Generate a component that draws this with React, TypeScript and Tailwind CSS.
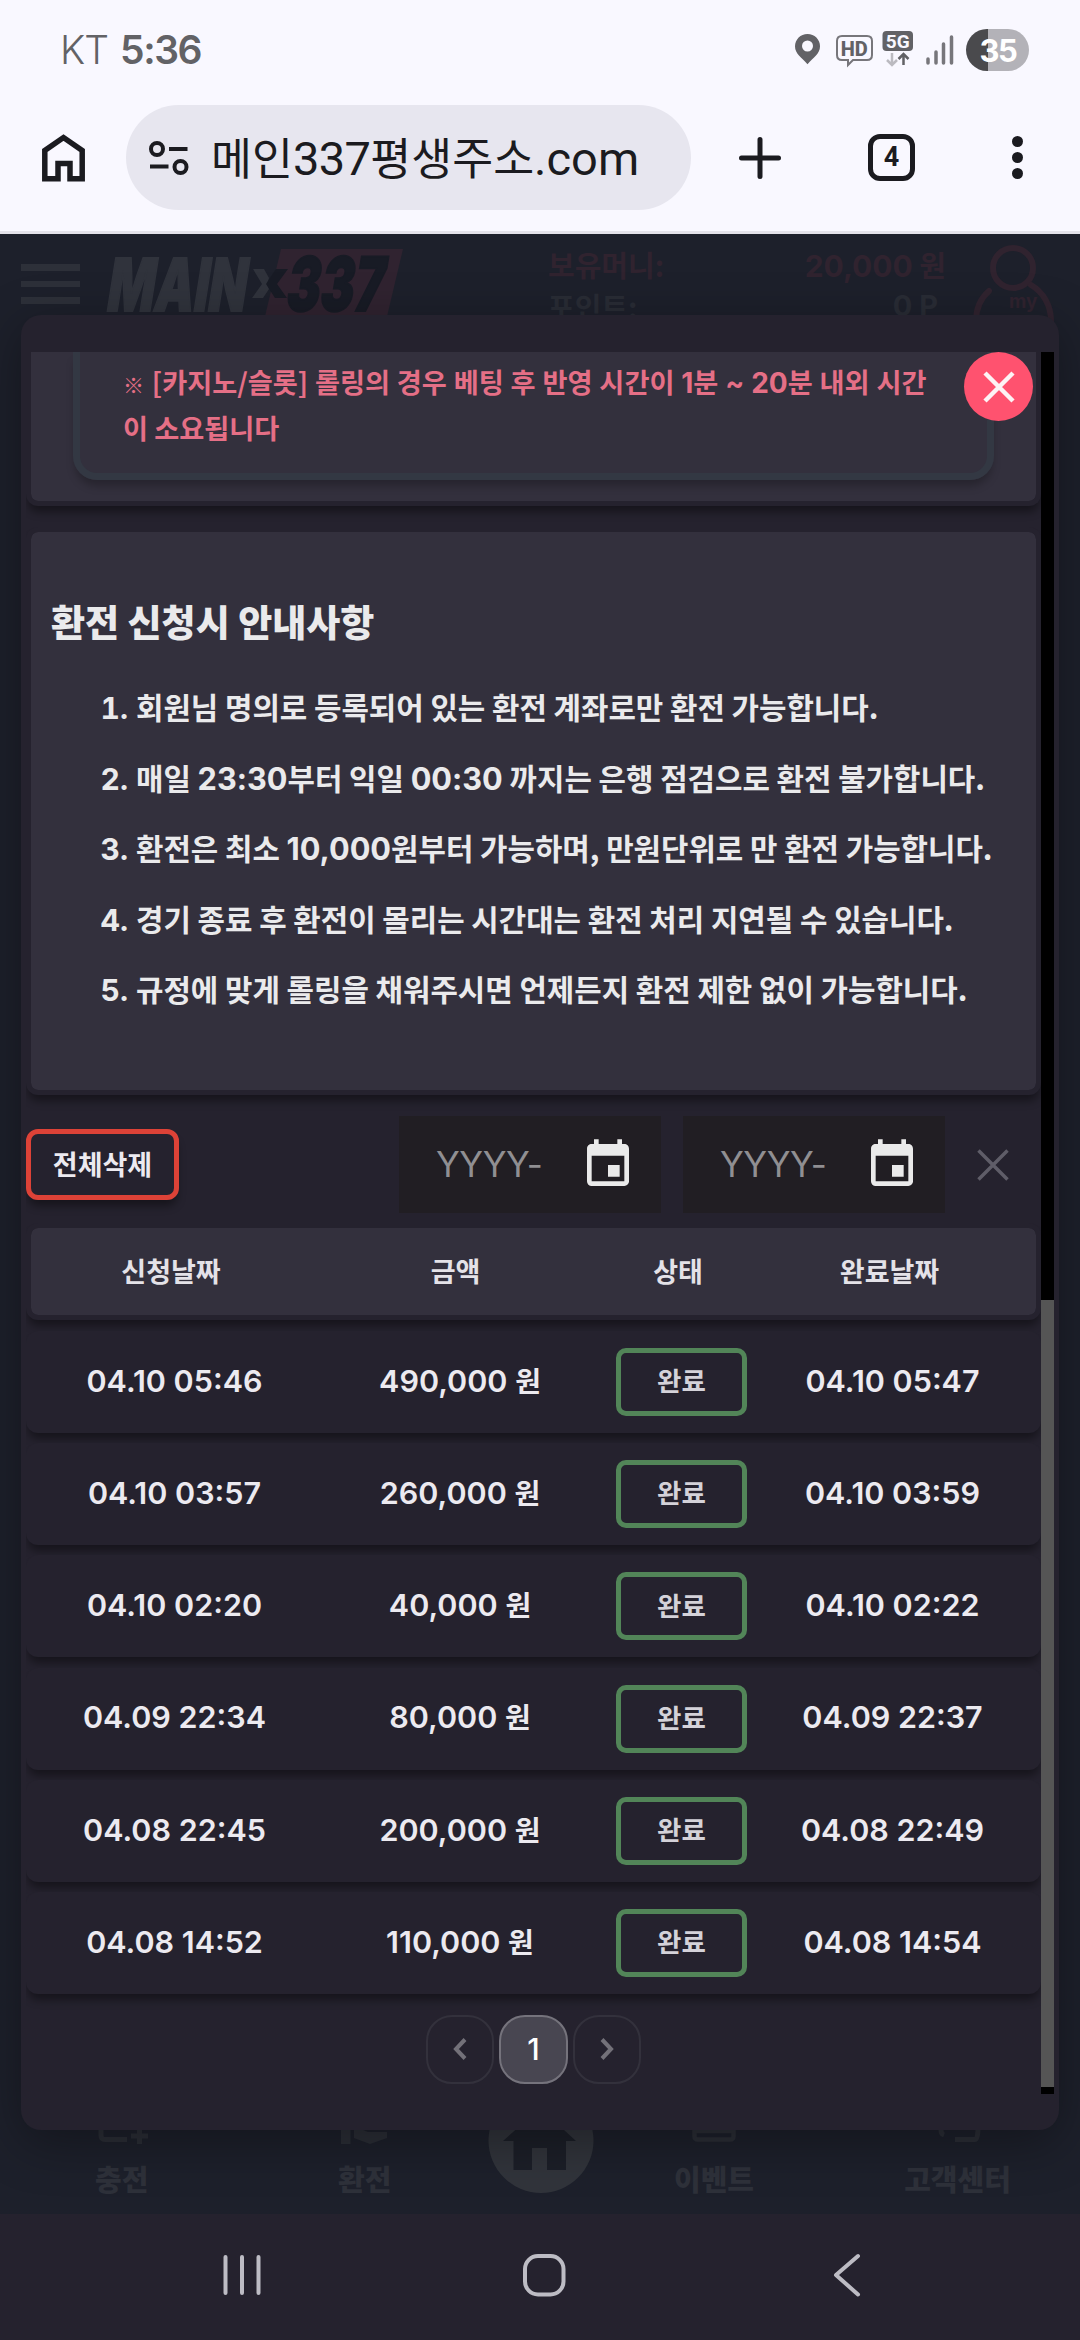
import { Fragment, ReactNode } from 'react';
import { MdEvent } from 'react-icons/md';

interface Withdrawal {
  requested: string;
  amount: string;
  completed: string;
}

const withdrawals: Withdrawal[] = [
  { requested: '04.10 05:46', amount: '490,000', completed: '04.10 05:47' },
  { requested: '04.10 03:57', amount: '260,000', completed: '04.10 03:59' },
  { requested: '04.10 02:20', amount: '40,000', completed: '04.10 02:22' },
  { requested: '04.09 22:34', amount: '80,000', completed: '04.09 22:37' },
  { requested: '04.08 22:45', amount: '200,000', completed: '04.08 22:49' },
  { requested: '04.08 14:52', amount: '110,000', completed: '04.08 14:54' },
];

const notices = [
  '회원님 명의로 등록되어 있는 환전 계좌로만 환전 가능합니다.',
  '매일 23:30부터 익일 00:30 까지는 은행 점검으로 환전 불가합니다.',
  '환전은 최소 10,000원부터 가능하며, 만원단위로 만 환전 가능합니다.',
  '경기 종료 후 환전이 몰리는 시간대는 환전 처리 지연될 수 있습니다.',
  '규정에 맞게 롤링을 채워주시면 언제든지 환전 제한 없이 가능합니다.',
];

// Digits run slightly larger than the hangul around them
function Mixed({ text }: { text: string }) {
  return (
    <>
      {text.split(/([0-9~][0-9:,.]*)/).map((part, index) =>
        /^[0-9~]/.test(part) ? (
          <span key={index} className="font-[Inter] text-[1.03em] leading-none">{part}</span>
        ) : (
          <Fragment key={index}>{part}</Fragment>
        )
      )}
    </>
  );
}

function StatusBar() {
  return (
    <div className="flex h-[100px] items-center justify-between pl-[60px] pr-[51px] text-[#626266]">
      <div className="flex items-baseline gap-3 pb-[1px] font-[Inter] text-[39px] leading-none">
        <span className="font-light tracking-[-1px]">KT</span>
        <span className="font-semibold tracking-[-1.4px]">5:36</span>
      </div>
      <svg width="235" height="44" viewBox="794 28 235 44" fill="none">
        <path d="M807.500 34c-7 0-12.500 5.500-12.500 12.300 0 7.500 6.500 11 12.500 17.900 6-6.900 12.500-10.400 12.500-17.900 0-6.800-5.500-12.300-12.500-12.300z" fill="#626266" />
        <circle cx="807.500" cy="46" r="5.500" fill="#f9f8ff" />
        <path d="M842 36h25q5 0 5 5v14q0 5-5 5h-14l-5 5v-5h-6q-5 0-5-5V41q0-5 5-5z" stroke="#77767b" strokeWidth="2" />
        <text x="854.300" y="55.500" textAnchor="middle" fontFamily="Roboto" fontWeight="800" fontSize="20" fill="#626266">HD</text>
        <rect x="882.500" y="31" width="30.500" height="20" rx="4" fill="#626266" />
        <text x="897.700" y="48" textAnchor="middle" fontFamily="Roboto" fontWeight="700" fontSize="19" fill="#f9f8ff">5G</text>
        <path d="M892 53v11M887 60l5 5 5-5" stroke="#bbbac0" strokeWidth="2.500" />
        <path d="M903.500 65V54M898.500 59l5-5 5 5" stroke="#626266" strokeWidth="2.500" />
        <path d="M928 59v4M936 52v11M943.500 44v19M951.500 37v26" stroke="#77767b" strokeWidth="3.500" strokeLinecap="round" />
        <path d="M988 29v42h-1a21 21 0 0 1 0-42z" fill="#4a4a4d" />
        <path d="M988 29h20a21 21 0 0 1 0 42h-20z" fill="#b3b2b8" />
        <text x="998" y="62" textAnchor="middle" fontFamily="Inter" fontWeight="700" fontSize="31" letterSpacing="-1.500" fill="#fff">35</text>
      </svg>
    </div>
  );
}

function BrowserBar() {
  return (
    <div className="flex h-[115px] items-center pl-[42px]">
      <svg width="43" height="48" viewBox="0 0 43 48" fill="none" stroke="#1b1b20" strokeWidth="5.500" className="shrink-0">
        <path d="M2.800 44.800V16.500L21.500 3.500l18.700 13v28.300H28V29.500H16v15.300z" />
      </svg>
      <div className="ml-[41px] flex h-[105px] w-[565px] shrink-0 items-center rounded-full bg-[#e7e6ef] pl-[23px]">
        <svg width="40" height="34" viewBox="0 0 40 34" fill="none" stroke="#1b1b20" strokeWidth="4" className="shrink-0">
          <circle cx="8" cy="8" r="6" />
          <circle cx="31.500" cy="26" r="6" />
          <path d="M20 8h18.500M1 25.500h18.500" />
        </svg>
        <div className="ml-[22px] whitespace-nowrap text-[44.5px] leading-[60px] text-[#1b1b20]">
          <span>메인</span>
          <span className="font-[Roboto] text-[47px] tracking-[-0.6px]">337</span>
          <span>평생주소</span>
          <span className="font-[Roboto] text-[47px]">.com</span>
        </div>
      </div>
      <svg width="42" height="42" viewBox="0 0 42 42" stroke="#1b1b20" strokeWidth="5" strokeLinecap="round" className="ml-[48px] shrink-0">
        <path d="M21 2.500v37M2.500 21h37" />
      </svg>
      <div className="ml-[87px] flex h-[47px] w-[47px] shrink-0 items-center justify-center rounded-xl border-[5px] border-[#1b1b20] font-[Roboto] text-[27px] font-bold leading-none text-[#1b1b20]">
        4
      </div>
      <div className="ml-[97px] flex flex-col gap-[5.5px]">
        <i className="h-[10.5px] w-[10.5px] rounded-full bg-[#1b1b20]" />
        <i className="h-[10.5px] w-[10.5px] rounded-full bg-[#1b1b20]" />
        <i className="h-[10.5px] w-[10.5px] rounded-full bg-[#1b1b20]" />
      </div>
    </div>
  );
}

function SiteHeader() {
  return (
    <header className="flex h-[100px] items-start font-bold text-[#30232f]">
      <div className="ml-[21px] mt-[30px] flex w-[59px] shrink-0 flex-col gap-[10px]">
        <i className="h-[6.5px] bg-[#2d3039]" />
        <i className="h-[6.5px] bg-[#2d3039]" />
        <i className="h-[6.5px] bg-[#2d3039]" />
      </div>
      <svg width="310" height="90" viewBox="100 240 310 90" className="ml-5 mt-[6px] shrink-0 overflow-visible">
        <path d="M281 249h122l-19 80H262z" fill="#302330" />
        <text transform="translate(105 311) skewX(-9) scale(.74 1)" fontFamily="Inter" fontWeight="900" fontSize="73" textLength="188" lengthAdjust="spacingAndGlyphs" fill="#30333c" stroke="#30333c" strokeWidth="2">MAIN</text>
        <path d="M253 269h11l5 9-2 6 2 5-6 9h-11l10-14z" fill="#30333c" />
        <path d="M276 269h12l-11 15 10 14h-12l-9-14z" fill="#181b25" />
        <text transform="translate(284 311) skewX(-9) scale(.74 1)" fontFamily="Inter" fontWeight="900" fontSize="75" textLength="132" lengthAdjust="spacingAndGlyphs" fill="#181b25" stroke="#181b25" strokeWidth="2">337</text>
      </svg>
      <div className="ml-[138px] mt-[9px] w-[398px] shrink-0 text-[29px] leading-[42px]">
        <div className="flex justify-between">
          <span>보유머니:</span>
          <span><span className="font-[Inter] text-[30px] leading-none">20,000</span> 원</span>
        </div>
        <div className="flex justify-between pr-2 text-[#292c35]">
          <span>포인트:</span>
          <span className="font-[Inter]">0 P</span>
        </div>
      </div>
      <svg width="86" height="90" viewBox="970 240 86 90" fill="none" stroke="#30232f" strokeWidth="6" strokeLinecap="round" className="ml-[24px] mt-[6px] shrink-0">
        <circle cx="1013" cy="268" r="20" />
        <path d="M989 291c-8 7-13 16-13 30M1031 285c12 7 20 20 20 36" />
        <text x="1009" y="308" fontFamily="Inter" fontWeight="700" fontSize="19" fill="#30232f" stroke="none">my</text>
      </svg>
    </header>
  );
}

function SiteTabs() {
  return (
    <div className="flex h-[144px] text-[29px] font-black leading-none text-[#2e313a]">
      <div className="ml-[95px] flex w-[53px] shrink-0 flex-col">
        <svg width="54" height="48" viewBox="95 2096 54 48" fill="none" stroke="#2b2e36" strokeWidth="5" className="mt-[26px]">
          <path d="M127 2139.500h-22q-4 0-4-4V2110h44M131 2136h17M139.500 2128v16" />
        </svg>
        <span className="mt-[20px] whitespace-nowrap">충전</span>
      </div>
      <div className="ml-[190px] flex w-[53px] shrink-0 flex-col">
        <svg width="54" height="48" viewBox="338 2096 54 48" fill="#2b2e36" className="mt-[26px]">
          <path d="M341 2110h9.500v34H341zM354 2126l14 6h19v6l-17 6-16-6z" />
        </svg>
        <span className="mt-[20px] whitespace-nowrap">환전</span>
      </div>
      <svg width="106" height="106" viewBox="488 2088 106 106" className="ml-[96.500px] mt-[18px] shrink-0">
        <circle cx="541" cy="2140.500" r="52.500" fill="#31343b" />
        <path d="M540 2108l36 33h-10v29h-19v-22h-15v22h-18.500v-29H503z" fill="#1c1f28" />
      </svg>
      <div className="ml-[80px] flex w-[81px] shrink-0 flex-col items-center">
        <svg width="46" height="48" viewBox="691 2096 46 48" fill="none" stroke="#2b2e36" strokeWidth="4.500" className="mt-[26px]">
          <rect x="694.500" y="2104" width="39" height="35.500" rx="3" />
          <path d="M694 2131h40" />
        </svg>
        <span className="mt-[20px] whitespace-nowrap">이벤트</span>
      </div>
      <div className="ml-[149px] flex w-[108px] shrink-0 flex-col items-center">
        <svg width="54" height="48" viewBox="932 2096 54 48" fill="none" stroke="#2b2e36" strokeWidth="5" className="mt-[26px]">
          <path d="M942 2120v10q0 4 3 5M956 2139.500h20q3 0 3-12h-6" />
        </svg>
        <span className="mt-[20px] whitespace-nowrap">고객센터</span>
      </div>
    </div>
  );
}

function Panel({ className = '', children }: { className?: string; children: ReactNode }) {
  return (
    <section className={`shrink-0 border-[5px] border-[#25222e] bg-[#33303d] bg-clip-padding shadow-[0_8px_8px_-2px_rgba(0,0,0,0.4)] ${className}`}>
      {children}
    </section>
  );
}

function DateField() {
  return (
    <div className="flex h-[97px] w-[262px] items-center bg-[#211e23] pl-[37px] font-[Inter] text-[35px] font-normal text-[#908f92]">
      <span className="w-[144px] tracking-[-0.4px]">YYYY-</span>
      <MdEvent className="h-[56px] w-[56px] shrink-0 text-[#eaeaea]" />
    </div>
  );
}

function Toolbar() {
  return (
    <div className="mt-[21px] flex h-[97px] shrink-0 items-center">
      <button className="h-[71px] w-[153px] rounded-xl border-[5px] border-[#dd4237] pb-[3px] text-[27px] font-bold leading-none text-[#eceaf0] shadow-[0_8px_8px_-2px_rgba(0,0,0,0.4)]">
        전체삭제
      </button>
      <div className="ml-[220px] flex gap-[22px]">
        <DateField />
        <DateField />
      </div>
      <svg width="32" height="32" viewBox="0 0 32 32" stroke="#5f5d68" strokeWidth="3.500" className="ml-[32px]">
        <path d="M1.500 1.500l29 29M30.500 1.500l-29 29" />
      </svg>
    </div>
  );
}

function HistoryTable() {
  return (
    <>
      <Panel className="mt-[10px] grid h-[97px] grid-cols-[280px_289px_156px_267px] items-center rounded-xl pb-[3px] text-center text-[27px] font-bold leading-none text-[#e4e2e8]">
        <span>신청날짜</span>
        <span>금액</span>
        <span>상태</span>
        <span>완료날짜</span>
      </Panel>
      <div className="mt-[11px] flex shrink-0 flex-col gap-[10.2px]">
        {withdrawals.map((row) => (
          <div
            key={row.requested}
            className="grid h-[102px] grid-cols-[297px_274px_169px_253px] items-center rounded-xl bg-[#25222e] text-center font-[Inter] text-[30.5px] font-semibold leading-none text-[#eceaf0] shadow-[0_8px_8px_-2px_rgba(0,0,0,0.4)]"
          >
            <span className="pb-[2px]">{row.requested}</span>
            <span className="pb-[2px]">
              {row.amount} <span className="font-['Noto_Sans_CJK_KR'] text-[28px] font-bold leading-none">원</span>
            </span>
            <span className="mx-auto flex h-[68px] w-[131px] items-center justify-center rounded-[10px] border-[5px] border-[#528558] pb-[3px] font-['Noto_Sans_CJK_KR'] text-[26.5px] font-bold text-[#d4d2d9]">
              완료
            </span>
            <span className="pb-[2px]">{row.completed}</span>
          </div>
        ))}
      </div>
    </>
  );
}

function Pagination() {
  return (
    <div className="mt-[21px] flex shrink-0 justify-center gap-[5px]">
      <button className="flex h-[69px] w-[68.500px] items-center justify-center rounded-[26px] border-2 border-[#33313c]">
        <svg width="14" height="22" viewBox="0 0 14 22" fill="none" stroke="#737179" strokeWidth="4">
          <path d="M12 1.500L3 11l9 9.500" />
        </svg>
      </button>
      <button className="flex h-[69px] w-[68.500px] items-center justify-center rounded-[26px] border-2 border-[#75737c] bg-[#484651] font-[Inter] text-[30px] font-medium text-white">
        1
      </button>
      <button className="flex h-[69px] w-[68.500px] items-center justify-center rounded-[26px] border-2 border-[#33313c]">
        <svg width="14" height="22" viewBox="0 0 14 22" fill="none" stroke="#737179" strokeWidth="4">
          <path d="M2 1.500l9 9.500-9 9.500" />
        </svg>
      </button>
    </div>
  );
}

function WithdrawModal() {
  return (
    <div className="absolute left-[21px] top-[81px] flex h-[1815px] w-[1038px] rounded-[20px] bg-[#25222e] px-[5px] pb-[36px] pt-[37px] shadow-[0_12px_50px_rgba(0,0,0,0.35)]">
      <div className="flex w-[1015px] flex-col overflow-hidden">
        <Panel className="flex h-[154px] rounded-b-xl border-t-0 px-[42px]">
          <div className="h-[128px] w-[921px] rounded-b-[24px] border-[7px] border-t-0 border-[#333843] pl-[43px] pt-[6px] text-[27.2px] font-bold leading-[46px] text-[#e56f86] shadow-[0_8px_8px_-2px_rgba(0,0,0,0.25)]">
            <p className="whitespace-nowrap [word-spacing:0.7px]">
              <span className="inline-block w-[22px] text-[21px] font-black leading-none">※</span>
              <Mixed text=" [카지노/슬롯] 롤링의 경우 베팅 후 반영 시간이 1분 ~ 20분 내외 시간" />
            </p>
            <p>이 소요됩니다</p>
          </div>
        </Panel>
        <Panel className="mt-[21px] h-[568px] rounded-xl pl-[20px] pt-[59px] text-[#eaeaec]">
          <h2 className="text-[37px] font-black leading-[60px]">환전 신청시 안내사항</h2>
          <ol className="mt-[20px] text-[29.8px] font-bold">
            {notices.map((notice, index) => (
              <li key={notice} className="flex h-[70.5px] items-baseline whitespace-nowrap leading-[70.5px]">
                <span className="w-[77px] text-right font-[Inter] text-[30px] tabular-nums">{index + 1}.</span>
                <span className="ml-[8px]"><Mixed text={notice} /></span>
              </li>
            ))}
          </ol>
        </Panel>
        <Toolbar />
        <HistoryTable />
        <Pagination />
      </div>
      <div className="flex w-[13px] flex-col bg-black pb-[7px] pt-[948px]">
        <div className="flex-1 bg-[#555555]" />
      </div>
      <button className="absolute left-[943px] top-[37px] flex h-[69px] w-[69px] items-center justify-center rounded-full bg-[#ff526f]">
        <svg width="32" height="32" viewBox="0 0 32 32" stroke="#fdf3f5" strokeWidth="4.500">
          <path d="M2 2l28 28M30 2L2 30" />
        </svg>
      </button>
    </div>
  );
}

function SystemNav() {
  return (
    <div className="flex h-[126px] shrink-0 items-center bg-[#25222e] pb-[4px] pl-[223px]">
      <svg width="640" height="44" viewBox="223 2253 640 44" fill="none" stroke="#bdbcc4" strokeWidth="4" strokeLinecap="round">
        <path d="M225.500 2257v36M242 2257v36M258.500 2257v36" />
        <rect x="525" y="2256" width="38.500" height="38.500" rx="13" />
        <path d="M858 2256l-22 19 22 19.500" strokeLinejoin="round" />
      </svg>
    </div>
  );
}

export default function App() {
  return (
    <div className="flex h-[2340px] w-[1080px] flex-col overflow-hidden bg-[#1d202b] font-['Noto_Sans_CJK_KR',sans-serif]">
      <div className="h-[234px] shrink-0 border-b-[3px] border-[#e3e2e9] bg-[#f9f8ff]">
        <StatusBar />
        <BrowserBar />
      </div>
      <main className="relative flex h-[1980px] shrink-0 flex-col justify-between overflow-hidden">
        <SiteHeader />
        <SiteTabs />
        <WithdrawModal />
      </main>
      <SystemNav />
    </div>
  );
}
